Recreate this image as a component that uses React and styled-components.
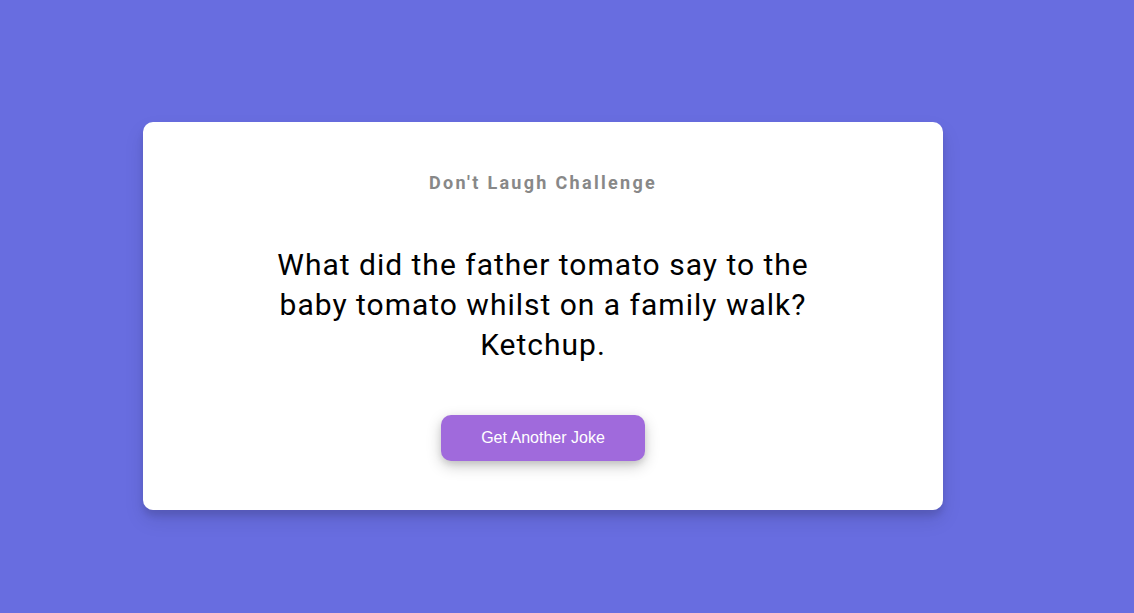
import React from 'react';
import styled, { createGlobalStyle } from 'styled-components';

const GlobalStyle = createGlobalStyle`
  * {
    box-sizing: border-box;
  }
  body {
    margin: 0;
    background-color: #686de0;
    font-family: Roboto, "Liberation Sans", sans-serif;
  }
`;

const Page = styled.div`
  min-height: 100vh;
  display: flex;
  justify-content: center;
  padding: 122px 48px 0 0;
`;

const Card = styled.div`
  width: 800px;
  height: 388px;
  background-color: #fff;
  border-radius: 10px;
  box-shadow: 0 10px 20px rgba(0, 0, 0, 0.1), 0 6px 6px rgba(0, 0, 0, 0.1);
  padding: 49px 20px 49px;
  display: flex;
  flex-direction: column;
  align-items: center;
`;

const Title = styled.h3`
  margin: 0;
  font-size: 18px;
  line-height: 24px;
  font-weight: 700;
  letter-spacing: 2.3px;
  color: #888;
`;

const Joke = styled.div`
  margin: 50px 0 50px;
  max-width: 570px;
  font-size: 30px;
  line-height: 40px;
  letter-spacing: 1px;
  text-align: center;
  color: #000;
`;

const Button = styled.button`
  width: 204px;
  height: 46px;
  border: none;
  border-radius: 10px;
  background-color: #a06adc;
  color: #fff;
  font-family: "Liberation Sans", Arial, sans-serif;
  font-size: 16px;
  cursor: pointer;
  box-shadow: 0 5px 15px rgba(0, 0, 0, 0.2), 0 3px 6px rgba(0, 0, 0, 0.1);
`;

export default function App() {
  return (
    <>
      <GlobalStyle />
      <Page>
        <Card>
          <Title>Don't Laugh Challenge</Title>
          <Joke>
            What did the father tomato say to the baby tomato whilst on a family walk? Ketchup.
          </Joke>
          <Button>Get Another Joke</Button>
        </Card>
      </Page>
    </>
  );
}
